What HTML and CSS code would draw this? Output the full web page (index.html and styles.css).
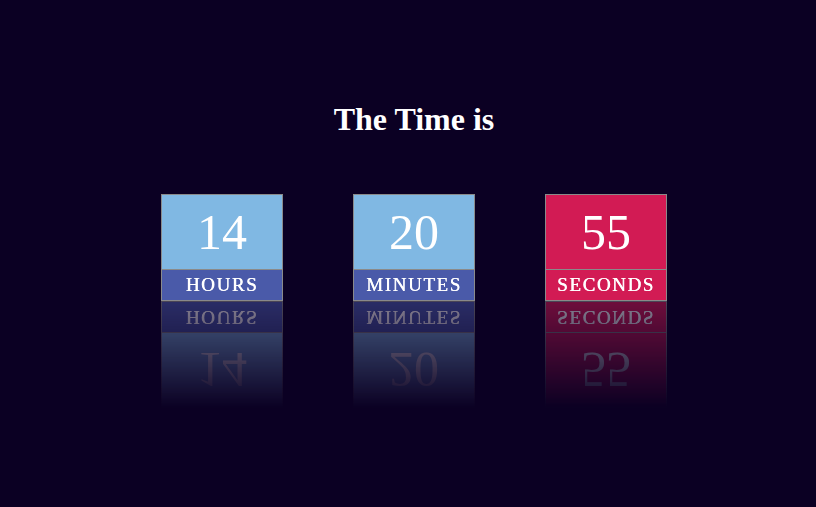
FILE: index.html
```html
<!DOCTYPE html>
<html>
<head>
<meta charset="utf-8">
<link rel="stylesheet" href="styles.css">
</head>
<body>
<main class="page">
  <h1 class="title">The Time is</h1>
  <div class="clock">
    <div class="unit unit-blue">
      <div class="value">14</div>
      <div class="label">HOURS</div>
    </div>
    <div class="unit unit-blue">
      <div class="value">20</div>
      <div class="label">MINUTES</div>
    </div>
    <div class="unit unit-red">
      <div class="value">55</div>
      <div class="label">SECONDS</div>
    </div>
  </div>
</main>
</body>
</html>
```

FILE: styles.css
```css
html, body {
  margin: 0;
  padding: 0;
  background: #0b0023;
  height: 100%;
}
body {
  font-family: "Liberation Serif", "Times New Roman", serif;
  color: #ffffff;
}
.page {
  padding: 101px 0 0 12px;
  display: flex;
  flex-direction: column;
  align-items: center;
}
.title {
  margin: 0;
  font-size: 32px;
  font-weight: bold;
  line-height: 37px;
}
.clock {
  margin-top: 56px;
  display: flex;
  gap: 70px;
}
.unit {
  width: 120px;
  border: 1px solid #8a8a8a;
  -webkit-box-reflect: below 0 linear-gradient(to bottom, transparent 0%, rgba(0,0,0,0.5) 100%);
}
.value {
  height: 74px;
  line-height: 74px;
  font-size: 50px;
  text-align: center;
}
.label {
  height: 30px;
  line-height: 30px;
  border-top: 1px solid #8a8a8a;
  font-size: 19px;
  letter-spacing: 1.6px;
  text-align: center;
  text-shadow: 0.4px 0 0 #ffffff;
}
.unit-blue .value { background: #80b8e3; }
.unit-blue .label { background: #4a5aa9; }
.unit-red .value { background: #d21b54; }
.unit-red .label { background: #d21b54; }
```
